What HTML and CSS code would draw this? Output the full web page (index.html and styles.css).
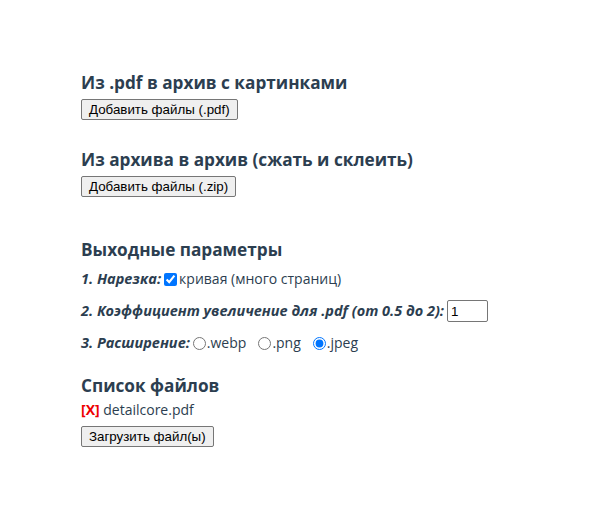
FILE: index.html
```html
<!DOCTYPE html>
<html>
<head>
<meta charset="utf-8">
<link rel="stylesheet" href="styles.css">
</head>
<body>
<div class="page">
  <section class="block">
    <h3 class="title">Из .pdf в архив с картинками</h3>
    <button class="btn">Добавить файлы (.pdf)</button>
  </section>
  <section class="block">
    <h3 class="title">Из архива в архив (сжать и склеить)</h3>
    <button class="btn">Добавить файлы (.zip)</button>
  </section>
  <section class="block params">
    <h3 class="title">Выходные параметры</h3>
    <div class="row"><b class="lbl">1. Нарезка:</b><input type="checkbox" checked class="chk">кривая (много страниц)</div>
    <div class="row"><b class="lbl">2. Коэффициент увеличение для .pdf (от 0.5 до 2):</b><input type="text" value="1" class="num"></div>
    <div class="row"><b class="lbl">3. Расширение:</b><input type="radio" name="ext" class="rad">.webp<input type="radio" name="ext" class="rad gap">.png<input type="radio" name="ext" class="rad gap" checked>.jpeg</div>
  </section>
  <section class="block files">
    <h3 class="title">Список файлов</h3>
    <div class="file"><span class="del">[X]</span> detailcore.pdf</div>
    <button class="btn">Загрузить файл(ы)</button>
  </section>
</div>
</body>
</html>
```
FILE: styles.css
```css
html, body { margin: 0; background: #fff; }
body { font-family: "Open Sans", "Noto Sans", sans-serif; font-size: 14px; color: #2c3e50; }
.page { padding: 71px 0 0 81px; }
.block { margin-bottom: 28px; }
.title { font-size: 17.2px; font-weight: 700; margin: 0 0 4px; color: #2c3e50; line-height: 24px; }
.btn { font-family: "Liberation Sans", Arial, sans-serif; font-size: 13.33px; color: #000; background: #efefef; border: 1px solid #767676; border-radius: 2px; padding: 1px 7px; height: 21px; display: block; }
.params { margin-top: 41px; margin-bottom: 0; }
.params .title { margin-bottom: 7px; }
.row { line-height: 20px; margin-bottom: 11px; display: flex; align-items: center; }
.params .row:last-child { margin-bottom: 0; }
.lbl { font-style: italic; font-size: 14.5px; margin-right: 3px; }
.chk { margin: 0 2px 0 0; width: 13px; height: 13px; accent-color: #0075ff; }
.rad { margin: 0 1px 0 0; width: 13px; height: 13px; }
.rad.gap { margin-left: 12px; }
.num { width: 41px; height: 22px; box-sizing: border-box; font-family: "Liberation Sans", Arial, sans-serif; font-size: 13.33px; padding: 1px 3px; border: 1px solid #767676; border-radius: 2px; color: #000; margin: 0; }
.files { margin-top: 21px; }
.files .title { margin-bottom: 1px; }
.file { margin-bottom: 5px; line-height: 22px; }
.del { color: #e00; font-weight: 700; }
```
